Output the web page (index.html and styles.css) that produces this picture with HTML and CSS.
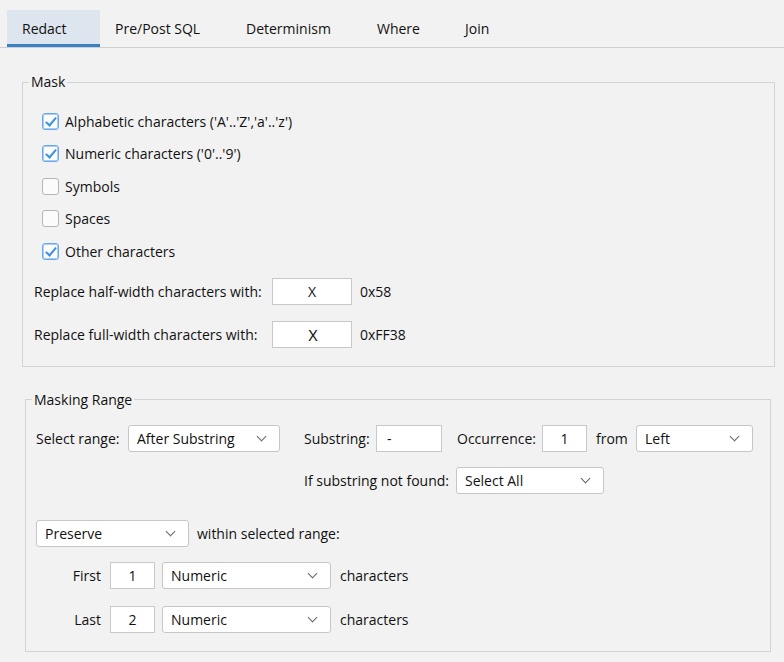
FILE: index.html
```html
<!DOCTYPE html>
<html lang="en">
<head>
    <meta charset="UTF-8">
    <title>Redact</title>
    <link rel="stylesheet" href="styles.css">
</head>
<body>

    <!-- tabs -->
    <div class="tab-strip">
        <div class="tab active t-redact">Redact</div>
        <div class="tab t-sql">Pre/Post SQL</div>
        <div class="tab t-det">Determinism</div>
        <div class="tab t-where">Where</div>
        <div class="tab t-join">Join</div>
    </div>

    <!-- Mask -->
    <fieldset class="group mask-group">
        <legend>Mask</legend>
        <div class="check-list">
            <div class="check-row"><span class="check on"></span>Alphabetic characters ('A'..'Z','a'..'z')</div>
            <div class="check-row"><span class="check on"></span>Numeric characters ('0'..'9')</div>
            <div class="check-row"><span class="check"></span>Symbols</div>
            <div class="check-row"><span class="check"></span>Spaces</div>
            <div class="check-row"><span class="check on"></span>Other characters</div>
        </div>
        <div class="replace-row first">
            <span class="replace-label">Replace half-width characters with:</span>
            <span class="text-box replace-box">X</span>
            <span class="code">0x58</span>
        </div>
        <div class="replace-row">
            <span class="replace-label">Replace full-width characters with:</span>
            <span class="text-box replace-box wide">Ｘ</span>
            <span class="code">0xFF38</span>
        </div>
    </fieldset>

    <!-- Masking Range -->
    <fieldset class="group range-group">
        <legend>Masking Range</legend>
        <div class="range-body">
            <div class="form-row">
                <span class="lbl w-range">Select range:</span>
                <span class="combo w-after">After Substring</span>
                <span class="lbl w-sub">Substring:</span>
                <span class="text-box left w-subbox">-</span>
                <span class="lbl w-occ">Occurrence:</span>
                <span class="text-box w-small">1</span>
                <span class="lbl w-from">from</span>
                <span class="combo w-left">Left</span>
            </div>
            <div class="form-row second">
                <span class="lbl w-notfound">If substring not found:</span>
                <span class="combo w-selall">Select All</span>
            </div>
            <div class="form-row third">
                <span class="combo w-preserve">Preserve</span>
                <span class="lbl">within selected range:</span>
            </div>
            <div class="form-row fourth">
                <span class="lbl pos">First</span>
                <span class="text-box w-small">1</span>
                <span class="combo w-kind">Numeric</span>
                <span class="lbl">characters</span>
            </div>
            <div class="form-row fifth">
                <span class="lbl pos">Last</span>
                <span class="text-box w-small">2</span>
                <span class="combo w-kind">Numeric</span>
                <span class="lbl">characters</span>
            </div>
        </div>
    </fieldset>

</body>
</html>
```

FILE: styles.css
```css
body {
    margin: 0;
    background-color: #f2f2f2;
    color: #111;
    font-family: "Open Sans", "Noto Sans", sans-serif;
    font-size: 14px;
    width: 784px;
    height: 662px;
    overflow: hidden;
}
/* tabs */
.tab-strip {
    display: flex;
    padding: 10px 0 0 7px;
    border-bottom: 1px solid #cfcfcf;
    height: 37px;
}
.tab {
    padding-left: 15px;
    line-height: 37px;
    box-sizing: border-box;
    white-space: nowrap;
}
.tab.active {
    background-color: #dde6ef;
    border-bottom: 3px solid #3b7fc4;
    padding-top: 3px;
    line-height: 31px;
}
.t-redact { width: 93px; }
.t-sql { width: 131px; }
.t-det { width: 131px; }
.t-where { width: 88px; }
.t-join { width: 60px; }
/* group boxes */
.group {
    border: 1px solid #d3d3d3;
    margin: 0;
    padding: 0;
}
.group legend {
    margin-left: 6px;
    padding: 0 2px;
    line-height: 20px;
}
.mask-group {
    margin: 24px 0 0 22px;
    width: 753px;
    box-sizing: border-box;
    padding: 13px 0 18px 0;
}
.check-list {
    padding-left: 19px;
}
.check-row {
    display: flex;
    align-items: center;
    height: 32.5px;
}
.check {
    width: 17px;
    height: 17px;
    box-sizing: border-box;
    border: 1px solid #b5b5b5;
    border-radius: 3px;
    background-color: #fbfbfb;
    margin-right: 6px;
    position: relative;
}
.check.on {
    border-color: #6aa8ea;
    box-shadow: inset 0 0 0 1px #a9cdf3;
    background-color: #fafcff;
}
.check.on::after {
    content: "";
    position: absolute;
    left: 5px;
    top: 1px;
    width: 4px;
    height: 9px;
    border: solid #3f8fe2;
    border-width: 0 2px 2px 0;
    transform: rotate(40deg);
}
.replace-row {
    display: flex;
    align-items: center;
    padding-left: 11px;
    margin-top: 16px;
}
.replace-row.first {
    margin-top: 10px;
}
.replace-label {
    width: 238px;
}
.code {
    margin-left: 8px;
}
/* inputs */
.text-box {
    display: inline-flex;
    align-items: center;
    justify-content: center;
    height: 27px;
    box-sizing: border-box;
    background-color: #fff;
    border: 1px solid #c9c9c9;
}
.text-box.left {
    justify-content: flex-start;
    padding-left: 10px;
}
.replace-box {
    width: 80px;
}
.replace-box.wide {
    font-family: "Noto Sans CJK JP", sans-serif;
    font-size: 15px;
    padding-left: 2px;
}
.combo {
    display: inline-flex;
    align-items: center;
    height: 27px;
    box-sizing: border-box;
    background-color: #fff;
    border: 1px solid #c6c6c6;
    border-radius: 3px;
    padding-left: 8px;
    position: relative;
}
.combo::after {
    content: "";
    position: absolute;
    right: 14px;
    top: 7px;
    width: 6px;
    height: 6px;
    border: solid #666;
    border-width: 0 1px 1px 0;
    transform: rotate(45deg);
}
/* masking range */
.range-group {
    margin: 23px 0 0 25px;
    width: 746px;
    box-sizing: border-box;
    padding: 15px 0 18px 0;
}
.range-body {
    padding-left: 10px;
}
.form-row {
    display: flex;
    align-items: center;
    height: 27px;
}
.form-row.second {
    margin-top: 15px;
}
.form-row.third {
    margin-top: 26px;
}
.form-row.fourth {
    margin-top: 15px;
}
.form-row.fifth {
    margin-top: 17px;
}
.lbl.w-range { width: 92px; }
.combo.w-after { width: 152px; margin-right: 24px; }
.lbl.w-sub { width: 72px; }
.text-box.w-subbox { width: 66px; margin-right: 15px; }
.lbl.w-occ { width: 85px; }
.text-box.w-small { width: 45px; }
.lbl.w-from { width: 40px; margin-left: 9px; }
.combo.w-left { width: 117px; }
.lbl.w-notfound { width: 152px; margin-left: 268px; }
.combo.w-selall { width: 148px; }
.combo.w-preserve { width: 153px; margin-right: 8px; }
.lbl.pos {
    width: 65px;
    text-align: right;
    margin-right: 9px;
}
.combo.w-kind { width: 169px; margin: 0 9px 0 7px; }
```
